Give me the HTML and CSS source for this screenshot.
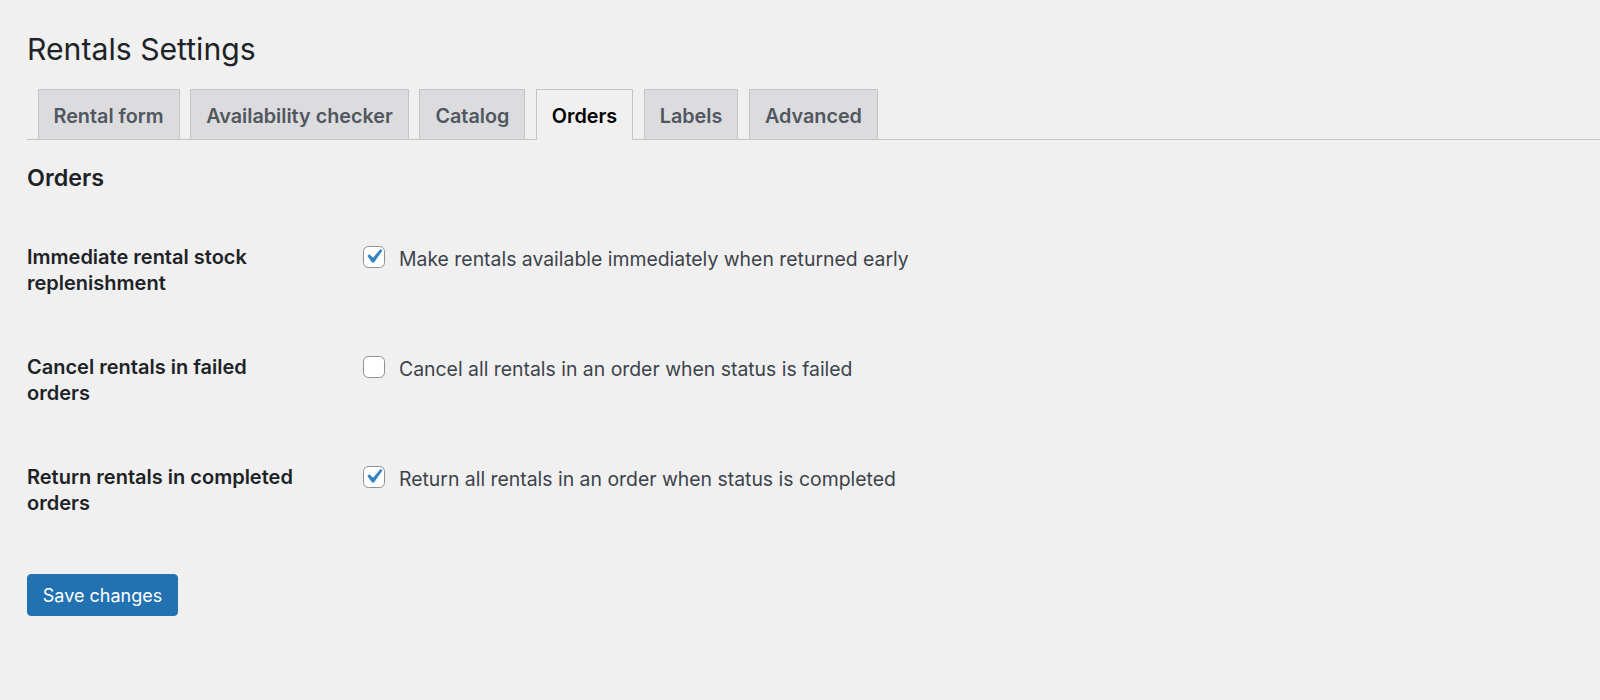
FILE: index.html
```html
<!DOCTYPE html>
<html lang="en">
<head>
<meta charset="utf-8">
<title>Rentals Settings</title>
<link rel="stylesheet" href="styles.css">
</head>
<body>
<div class="wrap">
  <h1 class="page-title">Rentals Settings</h1>
  <nav class="tabs">
    <a class="tab">Rental form</a>
    <a class="tab">Availability checker</a>
    <a class="tab">Catalog</a>
    <a class="tab tab-active">Orders</a>
    <a class="tab">Labels</a>
    <a class="tab">Advanced</a>
  </nav>
  <h2 class="section-title">Orders</h2>
  <div class="form-table">
    <div class="row">
      <div class="label-col"><div class="label">Immediate rental stock replenishment</div></div>
      <label class="field">
        <span class="cb"><svg class="check" viewBox="0 0 20 20"><path d="M14.83 4.89l1.34.94-5.81 8.38H9.02L5.78 9.67l1.34-1.25 2.57 2.4z"/></svg></span>
        <span class="field-text">Make rentals available immediately when returned early</span>
      </label>
    </div>
    <div class="row">
      <div class="label-col"><div class="label">Cancel rentals in failed orders</div></div>
      <label class="field">
        <span class="cb"></span>
        <span class="field-text">Cancel all rentals in an order when status is failed</span>
      </label>
    </div>
    <div class="row">
      <div class="label-col"><div class="label">Return rentals in completed orders</div></div>
      <label class="field">
        <span class="cb"><svg class="check" viewBox="0 0 20 20"><path d="M14.83 4.89l1.34.94-5.81 8.38H9.02L5.78 9.67l1.34-1.25 2.57 2.4z"/></svg></span>
        <span class="field-text">Return all rentals in an order when status is completed</span>
      </label>
    </div>
  </div>
  <button class="btn-primary">Save changes</button>
</div>
</body>
</html>
```

FILE: styles.css
```css
* { box-sizing: border-box; }
html, body { margin: 0; padding: 0; }
body {
  background: #f0f0f1;
  font-family: Inter, "Noto Sans", sans-serif;
  color: #3c434a;
  width: 1600px;
  height: 700px;
  overflow: hidden;
}
.wrap { padding: 0 0 0 27px; }
.page-title {
  margin: 0;
  padding-top: 29px;
  font-size: 30.2px;
  font-weight: 400;
  line-height: 40px;
  color: #1d2327;
}
.tabs {
  display: flex;
  gap: 10.5px;
  margin-top: 20px;
  padding-left: 10.5px;
  border-bottom: 1px solid #c3c4c7;
  height: 51px;
}
.tab {
  display: flex;
  align-items: center;
  padding: 2px 15px 0;
  height: 50px;
  background: #dcdcde;
  border: 1px solid #c3c4c7;
  border-bottom: none;
  font-size: 19.8px;
  font-weight: 600;
  line-height: 24px;
  color: #50575e;
  white-space: nowrap;
}
.tab-active {
  background: #f0f0f1;
  color: #000;
  height: 51px;
  padding-bottom: 1px;
}
.section-title {
  margin: 23px 0 0;
  font-size: 23.3px;
  font-weight: 600;
  line-height: 30px;
  color: #1d2327;
}
.form-table { margin-top: 50.5px; }
.row {
  display: flex;
  height: 110px;
}
.label-col {
  width: 336px;
  flex: none;
}
.label {
  width: 280px;
  font-size: 20px;
  font-weight: 600;
  line-height: 26px;
  color: #1d2327;
}
.field {
  display: flex;
  align-items: flex-start;
  margin-top: 2px;
  height: 26px;
  font-size: 19.4px;
  line-height: 26px;
  color: #3c434a;
}
.cb {
  width: 22px;
  height: 22px;
  border: 1.4px solid #8c8f94;
  border-radius: 5.5px;
  background: #fff;
  flex: none;
  position: relative;
  margin-right: 14px;
}
.check {
  position: absolute;
  left: -5.5px;
  top: -4.2px;
  width: 29px;
  height: 29px;
  fill: #3582c4;
}
.btn-primary {
  display: block;
  width: 151px;
  height: 42px;
  padding: 2px 0 0;
  background: #2271b1;
  border: 1px solid #2271b1;
  border-radius: 4px;
  color: #fff;
  font-family: inherit;
  font-size: 18px;
  line-height: 22px;
}
```
